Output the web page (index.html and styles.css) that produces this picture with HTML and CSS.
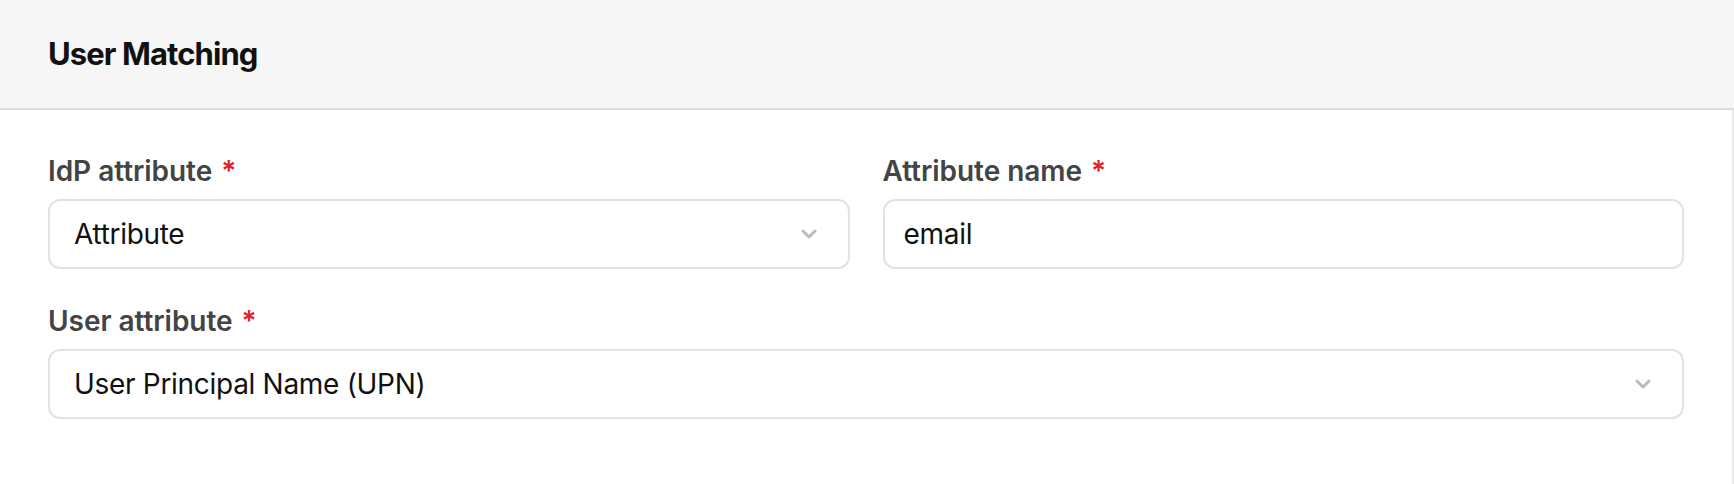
FILE: index.html
```html
<!DOCTYPE html>
<html lang="en">
<head>
<meta charset="utf-8">
<title>User Matching</title>
<link rel="stylesheet" href="styles.css">
</head>
<body>
<section class="card">
  <header class="card-header">
    <h2 class="card-title">User Matching</h2>
  </header>
  <div class="card-body">
    <div class="form-grid">
      <div class="field">
        <label class="field-label">IdP attribute <span class="req">*</span></label>
        <div class="select">
          <span class="select-value">Attribute</span>
          <svg class="chevron" width="16" height="10" viewBox="0 0 16 10" aria-hidden="true"><path d="M2 2 L8 8 L14 2" fill="none" stroke="#bbbbbb" stroke-width="3" stroke-linecap="round" stroke-linejoin="round"/></svg>
        </div>
      </div>
      <div class="field">
        <label class="field-label">Attribute name <span class="req">*</span></label>
        <input class="text-input" type="text" value="email">
      </div>
      <div class="field field-full">
        <label class="field-label">User attribute <span class="req">*</span></label>
        <div class="select">
          <span class="select-value">User Principal Name (UPN)</span>
          <svg class="chevron" width="16" height="10" viewBox="0 0 16 10" aria-hidden="true"><path d="M2 2 L8 8 L14 2" fill="none" stroke="#bbbbbb" stroke-width="3" stroke-linecap="round" stroke-linejoin="round"/></svg>
        </div>
      </div>
    </div>
  </div>
</section>
</body>
</html>
```

FILE: styles.css
```css
* { box-sizing: border-box; }

html, body {
  margin: 0;
  padding: 0;
  background: #ffffff;
}

body {
  font-family: Inter, "Noto Sans", "Liberation Sans", sans-serif;
  color: #111111;
}

.card {
  display: flex;
  flex-direction: column;
  min-height: 100vh;
  width: 100%;
}

.card-header {
  height: 110px;
  background: #f6f6f6;
  border-bottom: 2px solid #dedede;
  display: flex;
  align-items: center;
  padding: 0 48px;
}

.card-title {
  margin: 0;
  font-size: 31px;
  font-weight: 700;
  letter-spacing: -0.9px;
  color: #111111;
  line-height: 40px;
}

.card-body {
  flex: 1;
  border-right: 2px solid #e9e9e9;
  padding: 41px 48px 40px 48px;
}

.form-grid {
  display: grid;
  grid-template-columns: 1fr 1fr;
  column-gap: 33px;
  row-gap: 32px;
}

.field {
  display: flex;
  flex-direction: column;
}

.field-full {
  grid-column: 1 / -1;
}

.field-label {
  font-size: 28px;
  line-height: 40px;
  font-weight: 600;
  letter-spacing: -0.05px;
  color: #444444;
  margin-bottom: 8px;
}

.req {
  color: #e0242b;
  margin-left: 2px;
}

.select,
.text-input {
  height: 70px;
  border: 2px solid #e2e2e2;
  border-radius: 12px;
  background: #ffffff;
  font-family: inherit;
  font-size: 28px;
  font-weight: 400;
  letter-spacing: -0.3px;
  color: #111111;
}

.select {
  display: flex;
  align-items: center;
  justify-content: space-between;
  padding: 0 31px 0 24px;
}

.chevron {
  flex: none;
  display: block;
}

.text-input {
  width: 100%;
  padding: 0 19px;
  outline: none;
  margin: 0;
}
```
